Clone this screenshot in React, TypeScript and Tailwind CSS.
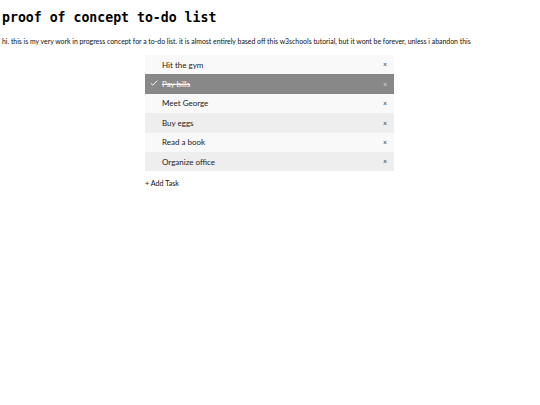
const tasks = [
  { label: "Hit the gym", done: false },
  { label: "Pay bills", done: true },
  { label: "Meet George", done: false },
  { label: "Buy eggs", done: false },
  { label: "Read a book", done: false },
  { label: "Organize office", done: false },
];

export default function App() {
  return (
    <div className="min-h-[405px] bg-white text-black [font-family:Lato,sans-serif]">
      <h1 className="pl-[2px] pt-[9px] text-[13.2px] font-bold leading-[18px] [font-family:'DejaVu_Sans_Mono',monospace]">
        proof of concept to-do list
      </h1>
      <p className="mt-[9px] pl-[2px] text-[6.9px] leading-[10px] text-[#111]">
        hi. this is my very work in progress concept for a to-do list. it is almost entirely based off this w3schools tutorial, but it wont be forever, unless i abandon this
      </p>
      <div className="ml-[145px] mt-[9px] w-[249px]">
        <ul>
          {tasks.map((t, i) => (
            <li
              key={t.label}
              className={
                "relative flex h-[19.4px] items-center pl-[17px] pr-[7px] text-[8px] " +
                (t.done
                  ? "bg-[#888] text-white"
                  : i % 2 === 0
                  ? "bg-[#f9f9f9] text-[#222]"
                  : "bg-[#eee] text-[#222]")
              }
            >
              {t.done && (
                <svg className="absolute left-[5px] top-[6px]" width="8" height="6" viewBox="0 0 8 6">
                  <path d="M0.7 3.2 L2.8 5.2 L7.3 0.6" fill="none" stroke="white" strokeWidth="0.9" />
                </svg>
              )}
              <span className={"flex-1 " + (t.done ? "line-through" : "")}>{t.label}</span>
              <span className={"text-[7px] " + (t.done ? "text-[#ddd]" : "text-[#333]")}>×</span>
            </li>
          ))}
        </ul>
        <div className="mt-[8px] text-[7.2px] text-[#111]">+ Add Task</div>
      </div>
    </div>
  );
}
